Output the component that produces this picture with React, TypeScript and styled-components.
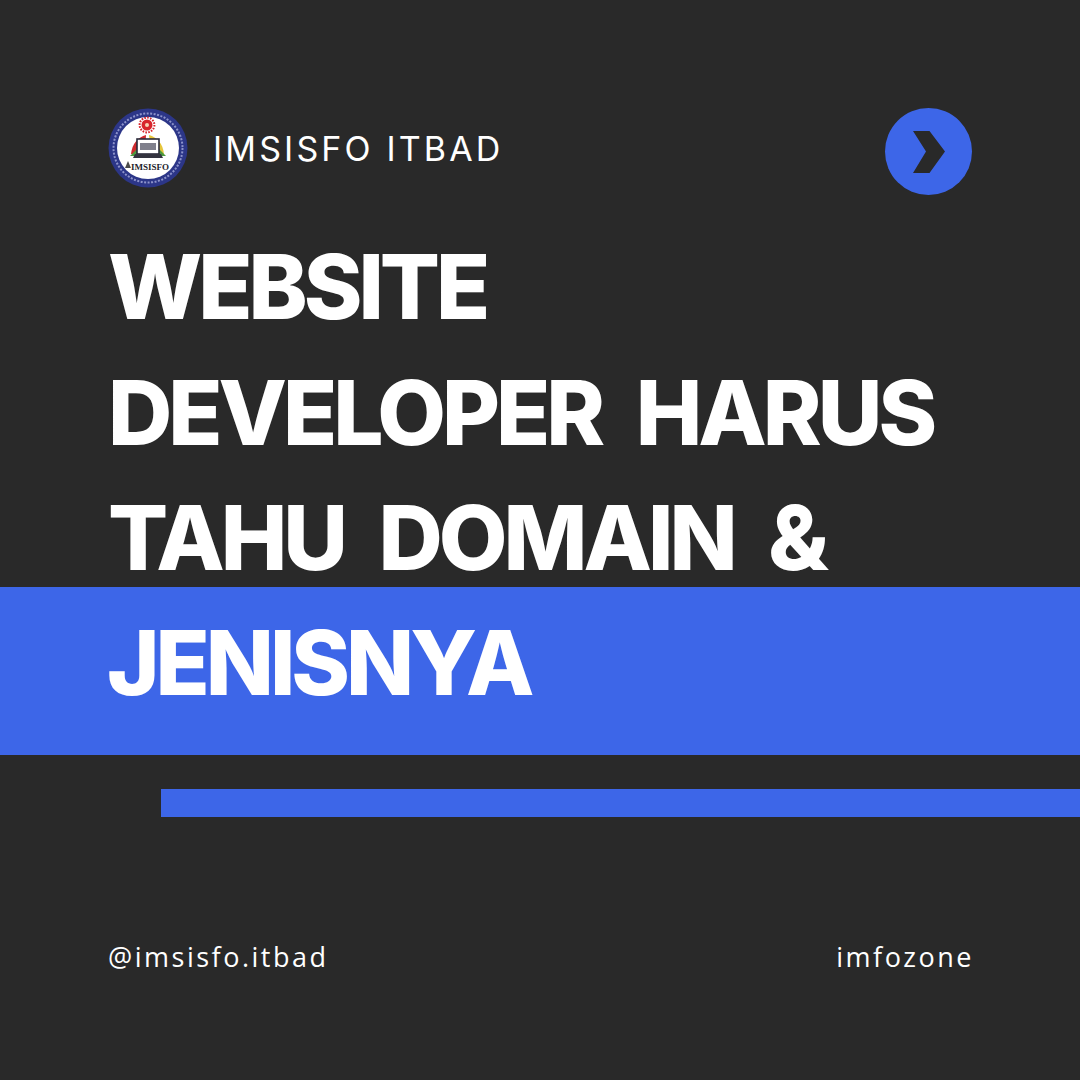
import * as React from 'react';
import styled, { createGlobalStyle } from 'styled-components';

const GlobalStyle = createGlobalStyle`
  html, body {
    margin: 0;
    padding: 0;
    background: #292929;
  }
`;

const Logo = () => (
  <LogoSvg viewBox="0 0 80 80">
    <circle cx="40" cy="40" r="39.5" fill="#2c3688" />
    <circle cx="40" cy="40" r="34.5" fill="none" stroke="#8d93cb" strokeWidth="2" strokeDasharray="2 1.5" />
    <circle cx="40" cy="40" r="31" fill="#fff" />
    <path d="M23 46 C24 36 30 29 38 27 L37 46 Z" fill="#cf2a2e" />
    <path d="M56 46 C55 36 49 29 41 27 L43 46 Z" fill="#e6c63c" />
    <path d="M22 48 L30 40 L32 48 Z" fill="#4d9a3f" />
    <path d="M58 48 L50 40 L48 48 Z" fill="#4d9a3f" />
    <circle cx="39" cy="17" r="5.5" fill="#d8262c" />
    <circle cx="39" cy="17" r="7.4" fill="none" stroke="#d8262c" strokeWidth="2" strokeDasharray="1.6 1.3" />
    <circle cx="39" cy="17" r="2" fill="#f6d3b4" />
    <rect x="29" y="31" width="22" height="15" fill="#fff" stroke="#2a2a3a" strokeWidth="1.6" />
    <rect x="32" y="35" width="16" height="7" fill="#80808c" />
    <path d="M27 46 H53 L55 50 H25 Z" fill="#33333f" />
    <path d="M17 60 L20 53 L23 60 Z" fill="#4a4a4a" />
    <text x="42" y="62" textAnchor="middle" fontFamily="'Liberation Serif', serif" fontWeight="700" fontSize="9" fill="#1d1d2b">
      IMSISFO
    </text>
  </LogoSvg>
);

const Arrow = () => (
  <ArrowSvg viewBox="0 0 32 42">
    <path d="M0 0 H16.5 L32 20.5 L16.5 42 H0 L13 20.5 Z" fill="#292929" />
  </ArrowSvg>
);

export default function App() {
  return (
    <Page>
      <GlobalStyle />
      <Header>
        <Brand>
          <Logo />
          <BrandName>IMSISFO ITBAD</BrandName>
        </Brand>
        <NextButton>
          <Arrow />
        </NextButton>
      </Header>
      <Title>
        <TitleLine>WEBSITE</TitleLine>
        <TitleLine>DEVELOPER HARUS</TitleLine>
        <TitleLine>TAHU DOMAIN &amp;</TitleLine>
      </Title>
      <Banner>
        <TitleLine>JENISNYA</TitleLine>
      </Banner>
      <Stripe />
      <Footer>
        <FooterText>@imsisfo.itbad</FooterText>
        <FooterText>imfozone</FooterText>
      </Footer>
    </Page>
  );
}

const Page = styled.main`
  width: 1080px;
  height: 1080px;
  overflow: hidden;
  background: #292929;
  color: #fff;
  font-family: 'Inter', 'Liberation Sans', sans-serif;
`;

const Header = styled.header`
  display: flex;
  justify-content: space-between;
  align-items: flex-start;
  padding: 108px 108px 0 108px;
`;

const Brand = styled.div`
  display: flex;
  align-items: center;
  gap: 25px;
`;

const LogoSvg = styled.svg`
  width: 80px;
  height: 80px;
  display: block;
`;

const BrandName = styled.div`
  font-size: 34px;
  font-weight: 400;
  letter-spacing: 3.15px;
`;

const NextButton = styled.div`
  width: 87px;
  height: 87px;
  border-radius: 50%;
  background: #3d66e8;
  display: flex;
  align-items: center;
  justify-content: center;
`;

const ArrowSvg = styled.svg`
  width: 32px;
  height: 42px;
  display: block;
`;

const Title = styled.h1`
  margin: 0 0 -13.5px;
  padding: 29px 0 0 108px;
  font-weight: 800;
`;

const TitleLine = styled.div`
  font-size: 89px;
  font-weight: 800;
  letter-spacing: -4px;
  word-spacing: 19px;
  line-height: 125.5px;
  white-space: nowrap;
`;

const Banner = styled.section`
  height: 168px;
  padding: 13px 0 0 107px;
  box-sizing: border-box;
  background: #3d66e8;
`;

const Stripe = styled.div`
  height: 28px;
  margin: 34px 0 0 161px;
  background: #3d66e8;
`;

const Footer = styled.footer`
  display: flex;
  justify-content: space-between;
  margin-top: 120px;
  padding: 0 106px 0 108px;
`;

const FooterText = styled.div`
  font-family: 'Open Sans', 'Liberation Sans', sans-serif;
  font-size: 27px;
  line-height: 40px;
  letter-spacing: 2.5px;
`;
